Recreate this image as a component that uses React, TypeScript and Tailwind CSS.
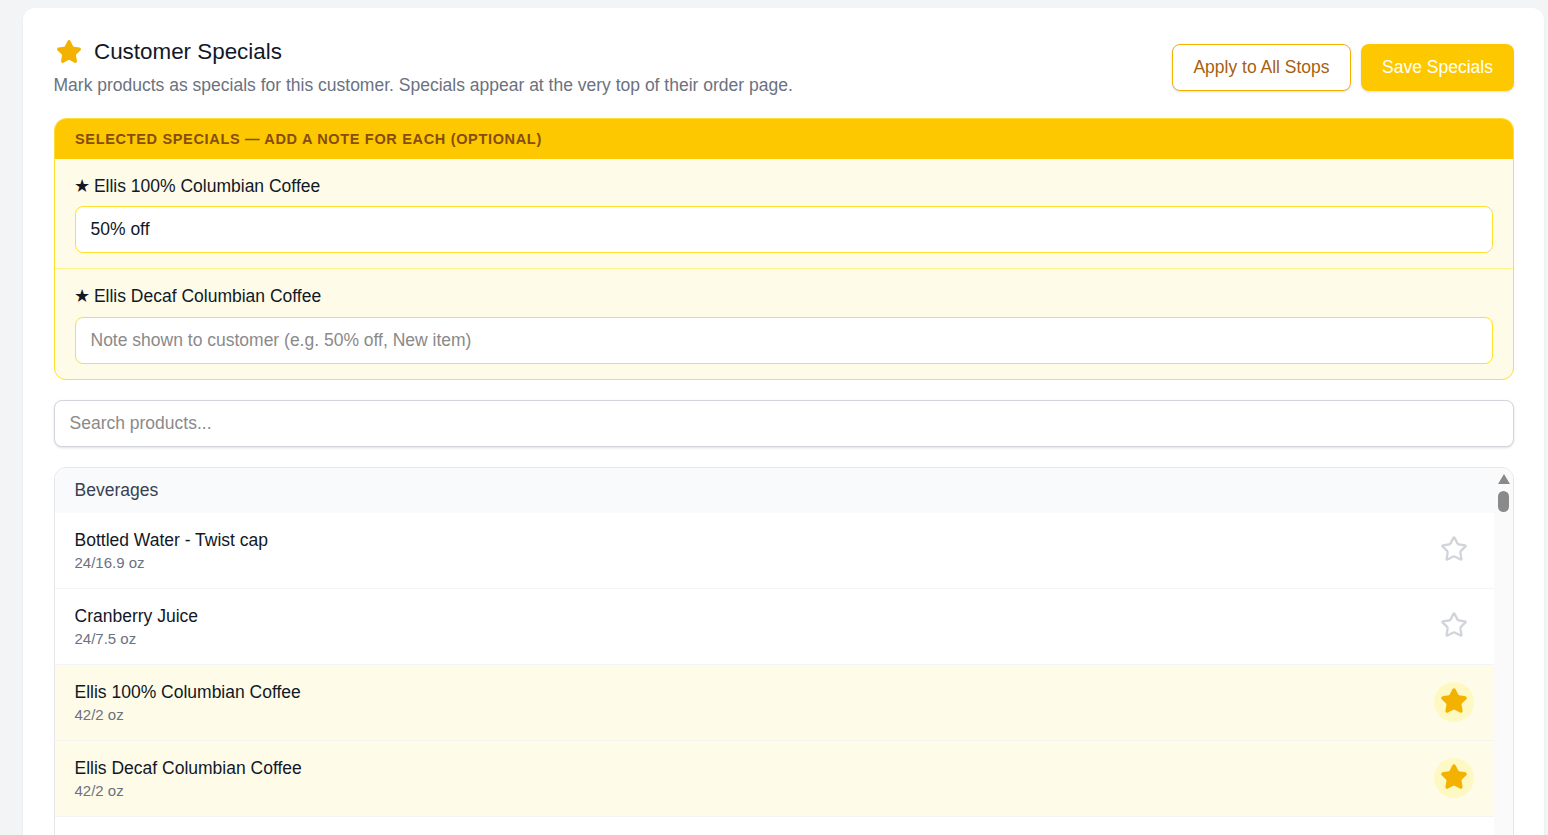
import { Star } from "lucide-react"

const selected = [
  { name: "Ellis 100% Columbian Coffee", note: "50% off" },
  { name: "Ellis Decaf Columbian Coffee", note: "" },
]

const products = [
  { name: "Bottled Water - Twist cap", size: "24/16.9 oz", special: false },
  { name: "Cranberry Juice", size: "24/7.5 oz", special: false },
  { name: "Ellis 100% Columbian Coffee", size: "42/2 oz", special: true },
  { name: "Ellis Decaf Columbian Coffee", size: "42/2 oz", special: true },
]

export default function App() {
  return (
    <div className="h-[835px] overflow-hidden bg-[#f3f4f6] pt-2 pl-[23px] pr-1 font-['Liberation_Sans',Arial,sans-serif]">
      <div className="rounded-t-xl bg-white pt-[28px] pr-[30px] pb-10 pl-[31px] shadow-[0_1px_3px_rgba(0,0,0,0.05)]">
        <div className="flex items-start justify-between">
          <div>
            <div className="flex items-center gap-3 pl-[2px]">
              <Star size={26} className="fill-[#f4b200] text-[#f4b200]" />
              <h2 className="text-[22.4px] leading-8 text-[#111827]">Customer Specials</h2>
            </div>
            <p className="mt-[3px] ml-[-0.5px] text-[17.5px] leading-7 text-[#6b7280]">
              Mark products as specials for this customer. Specials appear at the very top of their order page.
            </p>
          </div>
          <div className="mt-2 flex gap-[10px]">
            <button className="h-[47px] w-[179px] rounded-lg border border-[#f4b200] bg-white text-[17.5px] text-[#a85f12] shadow-sm">
              Apply to All Stops
            </button>
            <button className="h-[47px] w-[153px] rounded-lg bg-[#fdc800] text-[17.5px] text-white shadow-sm">
              Save Specials
            </button>
          </div>
        </div>

        <div className="mt-[19px] overflow-hidden rounded-xl border border-[#fedf2e] bg-[#fefce8]">
          <div className="flex h-10 items-center bg-[#fdc800] px-5 pt-[2px] text-[14.5px] font-bold tracking-[0.67px] text-[#854d0e]">
            SELECTED SPECIALS — ADD A NOTE FOR EACH (OPTIONAL)
          </div>
          {selected.map((item, i) => (
            <div
              key={item.name}
              className={i === 0 ? "border-b border-[#fef08a] px-5 pt-[17px] pb-[15px]" : "px-5 pt-[17px] pb-[15px]"}
            >
              <div className={`h-[21px] text-[17.5px] leading-[21px] text-[#111827] ${i === 0 ? "mb-[9px]" : "mb-[10px]"}`}>
                <span className="ml-[-1px] mr-[-1px]">★</span> {item.name}
              </div>
              <input
                readOnly
                value={item.note}
                placeholder="Note shown to customer (e.g. 50% off, New item)"
                className="block h-[47px] w-full rounded-lg border border-[#fedf2e] bg-white px-[14.5px] text-[17.5px] text-[#111827] outline-none placeholder:text-[#8a8a8a]"
              />
            </div>
          ))}
        </div>

        <input
          readOnly
          placeholder="Search products..."
          className="mt-5 block h-[47px] w-full rounded-lg border border-[#d1d5db] bg-white px-[14.5px] text-[17.5px] shadow-sm outline-none placeholder:text-[#8a8a8a]"
        />

        <div className="mt-5 flex overflow-hidden rounded-xl border border-[#e5e7eb]">
          <div className="min-w-0 flex-1">
            <div className="flex h-[45px] items-center bg-[#f9fafb] px-[19.5px] text-[17.5px] text-[#374151]">Beverages</div>
            {products.map((p) => (
              <div
                key={p.name}
                className={`flex h-[76px] items-center justify-between border-b border-[#f3f4f6] pr-5 pl-[19.5px] ${
                  p.special ? "bg-[#fefce8]" : "bg-white"
                }`}
              >
                <div>
                  <div className="text-[17.5px] leading-[24px] text-[#111827]">{p.name}</div>
                  <div className="text-[15px] leading-[22px] text-[#6b7280]">{p.size}</div>
                </div>
                <div
                  className={`mb-[2px] flex h-10 w-10 items-center justify-center rounded-full pb-[2px] ${
                    p.special ? "bg-[#fef9c3]" : ""
                  }`}
                >
                  {p.special ? (
                    <Star size={28} className="fill-[#f4b200] text-[#f4b200]" />
                  ) : (
                    <Star size={28} className="text-[#d1d5db]" />
                  )}
                </div>
              </div>
            ))}
            <div className="h-10" />
          </div>
          <div className="flex w-[19px] flex-col items-center bg-[#fafafa] pt-[6px]">
            <div className="h-0 w-0 border-x-[6.5px] border-b-[10px] border-x-transparent border-b-[#8a8a8a]" />
            <div className="mt-[7px] h-[21px] w-[11px] rounded-full bg-[#8a8a8a]" />
          </div>
        </div>
      </div>
    </div>
  )
}
